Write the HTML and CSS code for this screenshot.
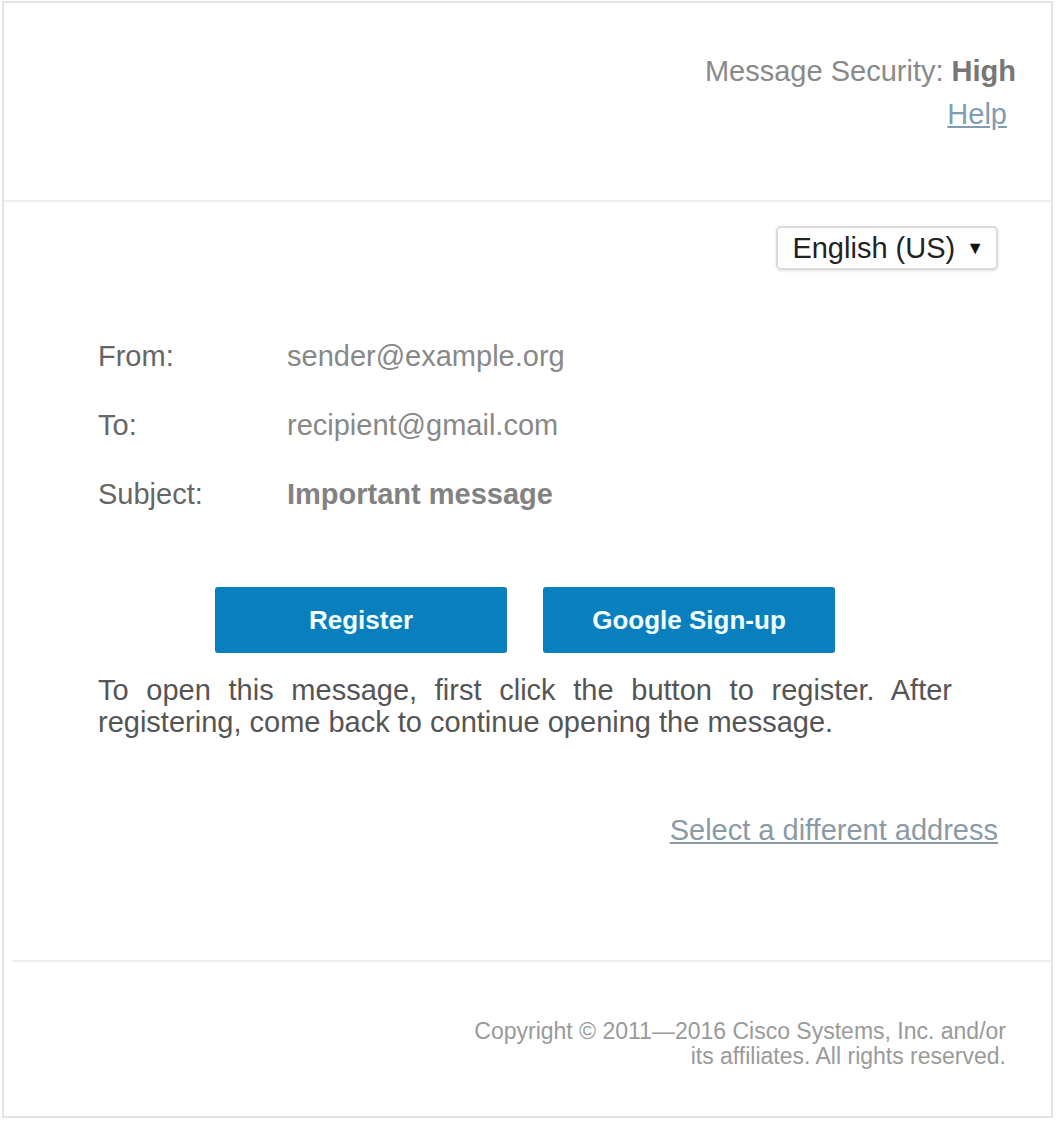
FILE: index.html
```html
<!DOCTYPE html>
<html lang="en">

<head>
    <meta charset="UTF-8">
    <meta name="viewport" content="width=device-width, initial-scale=1.0">
    <title>Secure Message</title>
    <link rel="stylesheet" href="styles.css">
</head>

<body>
    <div class="envelope">
        <div class="header">
            <div class="security">Message Security: <strong>High</strong></div>
            <a class="help" href="#">Help</a>
        </div>

        <div class="main">
            <div class="lang-row">
                <div class="lang-select">
                    <span>English (US)</span>
                    <span class="arrow">&#9660;</span>
                </div>
            </div>

            <div class="meta">
                <div class="meta-label">From:</div>
                <div class="meta-value">sender@example.org</div>
                <div class="meta-label">To:</div>
                <div class="meta-value">recipient@gmail.com</div>
                <div class="meta-label">Subject:</div>
                <div class="meta-value subject">Important message</div>
            </div>

            <div class="actions">
                <button class="btn">Register</button>
                <button class="btn">Google Sign-up</button>
            </div>

            <p class="note">To open this message, first click the button to register. After registering, come back to continue opening the message.</p>

            <div class="alt-row">
                <a class="alt-link" href="#">Select a different address</a>
            </div>
        </div>

        <div class="footer">
            Copyright &copy; 2011&mdash;2016 Cisco Systems, Inc. and/or<br>
            its affiliates. All rights reserved.
        </div>
    </div>
</body>

</html>
```

FILE: styles.css
```css
body {
    margin: 0;
    font-family: "Liberation Sans", Arial, sans-serif;
    font-size: 29px;
    background: #fff;
}

.envelope {
    width: 1047px;
    margin: 1px 0 0 2px;
    border: 2px solid #e4e4e4;
}

.header {
    height: 199px;
    box-sizing: border-box;
    padding: 47px 35px 0 0;
    border-bottom: 2px solid #eeeeee;
    text-align: right;
    line-height: 43px;
}

.security {
    color: #8a8a8a;
}

.security strong {
    color: #777;
}

.help {
    display: inline-block;
    margin-right: 9px;
    color: #7f9db2;
}

.main {
    padding: 24px 53px 0 94px;
}

.lang-row {
    display: flex;
    justify-content: flex-end;
}

.lang-select {
    display: flex;
    align-items: center;
    gap: 11px;
    height: 44px;
    box-sizing: border-box;
    padding: 0 12px 0 14px;
    border: 2px solid #dadada;
    border-radius: 5px;
    box-shadow: 0 1px 3px rgba(0, 0, 0, 0.12);
    color: #222;
}

.lang-select .arrow {
    font-size: 18px;
    color: #111;
}

.meta {
    display: grid;
    grid-template-columns: 189px 1fr;
    grid-auto-rows: 69px;
    align-items: center;
    margin-top: 52px;
}

.meta-label {
    color: #666;
}

.meta-value {
    color: #888;
}

.meta-value.subject {
    font-weight: bold;
    color: #828282;
}

.actions {
    width: 854px;
    display: flex;
    justify-content: center;
    gap: 36px;
    margin-top: 58px;
}

.btn {
    width: 292px;
    height: 66px;
    border: none;
    border-radius: 3px;
    background-color: #0a7fbd;
    color: #f2ffff;
    font-family: "Liberation Sans", Arial, sans-serif;
    font-size: 26px;
    font-weight: bold;
    cursor: pointer;
}

.note {
    width: 854px;
    margin: 21px 0 0;
    line-height: 32px;
    text-align: justify;
    color: #555;
}

.alt-row {
    display: flex;
    justify-content: flex-end;
    margin-top: 72px;
    line-height: 40px;
    padding-bottom: 110px;
}

.alt-link {
    color: #8a9aa6;
}

.footer {
    margin-left: 8px;
    border-top: 2px solid #eeeeee;
    padding: 57px 45px 47px 0;
    text-align: right;
    font-size: 23px;
    line-height: 25px;
    color: #9a9a9a;
}
```
